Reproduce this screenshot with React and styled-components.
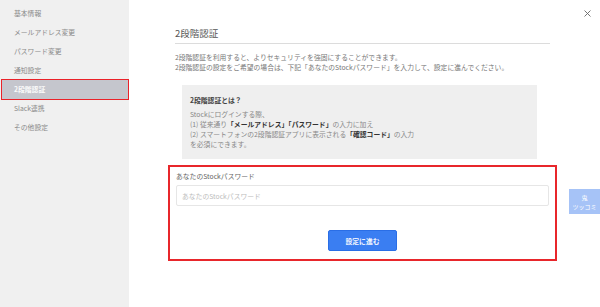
import React from "react";
import styled, { createGlobalStyle } from "styled-components";

const Global = createGlobalStyle`
  html, body { margin: 0; padding: 0; background: #fff; }
  body { font-family: "Noto Sans CJK JP", "Noto Sans", sans-serif; -webkit-font-smoothing: antialiased; }
  * { box-sizing: border-box; }
`;

const Page = styled.div`
  display: flex;
  width: 600px;
  height: 307px;
  position: relative;
  overflow: hidden;
`;

const Sidebar = styled.nav`
  width: 129px;
  flex: none;
  background: #f0f0f0;
  padding-top: 4px;
  display: flex;
  flex-direction: column;
`;

const NavItem = styled.div`
  height: 19px;
  line-height: 19px;
  padding-left: ${p => (p.$active ? "12px" : "14px")};
  margin: ${p => (p.$active ? "0 1px 0 2px" : "0")};
  font-size: 6.8px;
  color: ${p => (p.$active ? "#fafafa" : "#8a8a8a")};
  background: ${p => (p.$active ? "#c5c6cd" : "transparent")};
  outline: ${p => (p.$active ? "1.5px solid #ea2229" : "none")};
  outline-offset: 0.5px;
  font-weight: ${p => (p.$active ? 700 : 400)};
`;

const Main = styled.main`
  flex: 1;
  padding: 26px 0 0 46px;
`;

const Content = styled.div`
  width: 375px;
`;

const Title = styled.h1`
  margin: 0;
  font-size: 9.5px;
  font-weight: 400;
  line-height: 14px;
  color: #555;
  padding-bottom: 3px;
  border-bottom: 1px solid #dcdcdc;
`;

const Desc = styled.p`
  margin: 8px 0 0;
  font-size: 6.8px;
  line-height: 10px;
  color: #777;
`;

const InfoBox = styled.div`
  margin: 13px 0 0 7px;
  width: 355px;
  background: #efefef;
  padding: 10px 8px 10px;
  font-size: 6.8px;
  line-height: 10px;
  color: #888;
`;

const InfoTitle = styled.div`
  font-weight: 700;
  color: #444;
  margin-bottom: 4px;
`;

const Strong = styled.b`
  color: #333;
  font-weight: 700;
`;

const Form = styled.div`
  margin: 6px -7px 0;
  border: 2px solid #e8262b;
  padding: 4px 6px 8px;
  display: flex;
  flex-direction: column;
`;

const Label = styled.label`
  font-size: 6.8px;
  line-height: 10px;
  color: #666;
`;

const Input = styled.input`
  margin-top: 4px;
  height: 21px;
  border: 1px solid #e6e6e6;
  border-radius: 2px;
  padding: 0 5px;
  font-family: inherit;
  font-size: 6.8px;
  color: #444;
  outline: none;
  &::placeholder { color: #bdbdbd; }
`;

const Button = styled.button`
  align-self: center;
  margin-top: 24px;
  width: 69px;
  height: 21px;
  background: #3a7ef2;
  border: 1px solid #2a6ee6;
  border-radius: 2px;
  color: #f4f7ff;
  font-family: inherit;
  font-size: 6.8px;
  font-weight: 700;
  padding: 0;
`;

const Close = styled.div`
  position: absolute;
  top: 10px;
  right: 9px;
  width: 7px;
  height: 7px;
  display: flex;
`;

const Badge = styled.div`
  position: absolute;
  right: 0;
  top: 189px;
  width: 31px;
  height: 25px;
  background: #a6c3f7;
  color: #fff;
  font-size: 6px;
  line-height: 9px;
  font-weight: 400;
  display: flex;
  flex-direction: column;
  align-items: center;
  justify-content: center;
`;

const menu = ["基本情報", "メールアドレス変更", "パスワード変更", "通知設定", "2段階認証", "Slack連携", "その他設定"];

export default function App() {
  return (
    <>
      <Global />
      <Page>
        <Sidebar>
          {menu.map(m => (
            <NavItem key={m} $active={m === "2段階認証"}>{m}</NavItem>
          ))}
        </Sidebar>
        <Main>
          <Content>
            <Title>2段階認証</Title>
            <Desc>
              2段階認証を利用すると、よりセキュリティを強固にすることができます。<br />
              2段階認証の設定をご希望の場合は、下記「あなたのStockパスワード」を入力して、設定に進んでください。
            </Desc>
            <InfoBox>
              <InfoTitle>2段階認証とは？</InfoTitle>
              Stockにログインする際、<br />
              (1) 従来通り<Strong>「メールアドレス」「パスワード」</Strong>の入力に加え<br />
              (2) スマートフォンの2段階認証アプリに表示される<Strong>「確認コード」</Strong>の入力<br />
              を必須にできます。
            </InfoBox>
            <Form>
              <Label>あなたのStockパスワード</Label>
              <Input type="password" placeholder="あなたのStockパスワード" />
              <Button>設定に進む</Button>
            </Form>
          </Content>
        </Main>
        <Close>
          <svg width="7" height="7" viewBox="0 0 7 7">
            <path d="M0.5 0.5 L6.5 6.5 M6.5 0.5 L0.5 6.5" stroke="#666" strokeWidth="0.9" fill="none" />
          </svg>
        </Close>
        <Badge>
          <span>鬼</span>
          <span>ツッコミ</span>
        </Badge>
      </Page>
    </>
  );
}
